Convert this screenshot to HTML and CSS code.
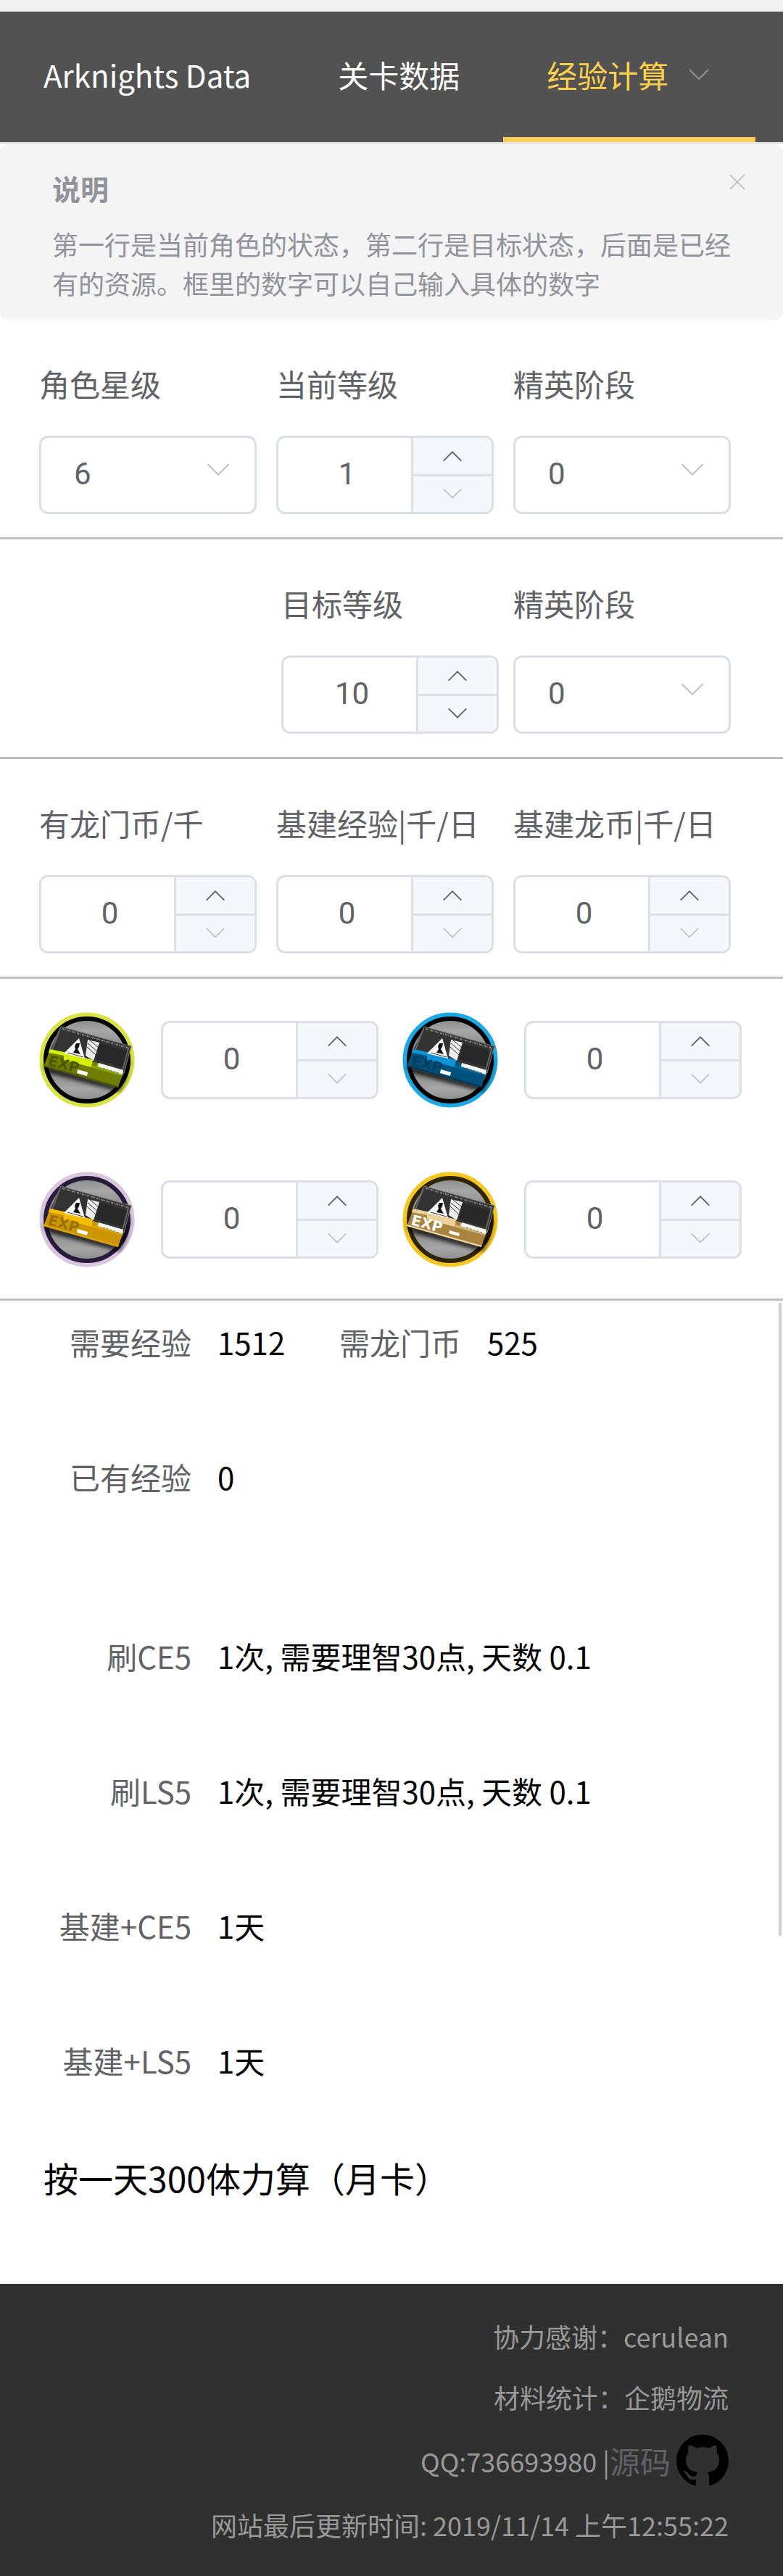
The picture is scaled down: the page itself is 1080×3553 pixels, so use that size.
FILE: index.html
```html
<!DOCTYPE html>
<html lang="zh-CN">
<head>
  <meta charset="utf-8">
  <meta name="viewport" content="width=device-width, initial-scale=1.0">
  <title>Arknights Data</title>
  <link rel="stylesheet" href="styles.css">
</head>
<body>
  <!-- Shared icons -->
  <svg class="icon-defs" aria-hidden="true">
    <defs>
      <linearGradient id="disc" x1="0" y1="0" x2="0" y2="1">
        <stop offset="0" stop-color="#8a8a8a"/>
        <stop offset="0.15" stop-color="#a6a6a6"/>
        <stop offset="0.5" stop-color="#777"/>
        <stop offset="0.85" stop-color="#a6a6a6"/>
        <stop offset="1" stop-color="#8a8a8a"/>
      </linearGradient>
      <filter id="soft"><feGaussianBlur stdDeviation="3"/></filter>
    </defs>
    <symbol id="down" viewBox="0 0 36 36">
      <path d="M5 11 L18 24 L31 11" fill="none" stroke="currentColor" stroke-width="2"/>
    </symbol>
    <symbol id="up" viewBox="0 0 36 36">
      <path d="M5 25 L18 12 L31 25" fill="none" stroke="currentColor" stroke-width="2"/>
    </symbol>
    <symbol id="card" viewBox="0 0 132 132">
      <circle cx="66" cy="66" r="62" class="card-ring"/>
      <circle cx="66" cy="66" r="57" class="card-inner"/>
      <path d="M8 76 L110 104 L124 66 L118 92 L110 108 L14 82 Z" fill="#000" stroke="#000" stroke-width="2" filter="url(#soft)"/>
      <path d="M30 20 L127 47 L117 84 L15 52 Z" fill="#333" stroke="#777" stroke-width="1"/>
      <path d="M32 23 L125 50" stroke="#888" stroke-width="2" stroke-dasharray="3 1 1 2"/>
      <path d="M29 23 L18 52 M123 50 L115 80" stroke="#666" stroke-width="2"/>
      <path d="M84 43 L121 54 L115 76 L78 65 Z" fill="#282828"/>
      <path d="M15 52 L116 82 L109 104 L6 75 Z" class="card-dark"/>
      <path d="M15 51 L34 55 L34 60 L13 56 Z" class="card-bright"/>
      <path d="M34 55 L74 66 L72 76 L34 66 Z" class="card-bright"/>
      <path d="M74 68 L116 82 L114 88 L72 76 Z" class="card-light"/>
      <path d="M6 74 L109 103" class="card-edge"/>
      <path d="M55 36 L34 57 L63 64 Z" fill="#fff"/>
      <path d="M51 43 L56 43 L55 48 L53 51 L57 58 L47 56 L50 51 L49 47 Z" fill="#111"/>
      <path d="M39 56 L61 62" stroke="#333" stroke-width="1"/>
      <path d="M67 38 L83 42 L75 67 L64 60 Z" fill="#eee"/>
      <path d="M69 38 L82 49 M67 43 L80 54 M66 48 L78 59" stroke="#333" stroke-width="1"/>
      <path d="M82 70 L116 80 L115 86 L81 75 Z" fill="#f4f8f0"/>
      <path d="M88 77 L110 84" stroke="#777" stroke-width="1" stroke-dasharray="3 2"/>
      <path d="M74 68 L80 70 L79 75 L73 73 Z" class="card-dark"/>
    </symbol>
  </svg>

  <header class="header">
    <nav class="menu">
      <a class="menu-item" href="#">Arknights Data</a>
      <a class="menu-item" href="#">关卡数据</a>
      <a class="menu-item active" href="#">经验计算<svg class="menu-arrow"><use href="#down"/></svg></a>
    </nav>
  </header>

  <div class="alert">
    <div class="alert-title">说明</div>
    <p class="alert-text">第一行是当前角色的状态，第二行是目标状态，后面是已经有的资源。框里的数字可以自己输入具体的数字</p>
    <button class="alert-close" type="button" aria-label="关闭">
      <svg viewBox="0 0 24 24"><path d="M2 2 L22 22 M22 2 L2 22" stroke="currentColor" stroke-width="2"/></svg>
    </button>
  </div>

  <form>
    <!-- Current state -->
    <div class="row">
      <div class="field">
        <label for="star">角色星级</label>
        <div class="select">
          <select id="star"><option>6</option><option>5</option><option>4</option><option>3</option></select>
          <svg><use href="#down"/></svg>
        </div>
      </div>
      <div class="field">
        <label for="level">当前等级</label>
        <div class="number">
          <input id="level" type="number" min="1" value="1">
          <div class="steps">
            <button type="button" aria-label="增加"><svg><use href="#up"/></svg></button>
            <button type="button" aria-label="减少" disabled><svg><use href="#down"/></svg></button>
          </div>
        </div>
      </div>
      <div class="field">
        <label for="elite">精英阶段</label>
        <div class="select">
          <select id="elite"><option>0</option><option>1</option><option>2</option></select>
          <svg><use href="#down"/></svg>
        </div>
      </div>
    </div>

    <!-- Target state -->
    <div class="row row-target">
      <div class="field">
        <label for="target-level">目标等级</label>
        <div class="number">
          <input id="target-level" type="number" min="1" value="10">
          <div class="steps">
            <button type="button" aria-label="增加"><svg><use href="#up"/></svg></button>
            <button type="button" aria-label="减少"><svg><use href="#down"/></svg></button>
          </div>
        </div>
      </div>
      <div class="field">
        <label for="target-elite">精英阶段</label>
        <div class="select">
          <select id="target-elite"><option>0</option><option>1</option><option>2</option></select>
          <svg><use href="#down"/></svg>
        </div>
      </div>
    </div>

    <!-- Resources -->
    <div class="row">
      <div class="field">
        <label for="money">有龙门币/千</label>
        <div class="number">
          <input id="money" type="number" min="0" value="0">
          <div class="steps">
            <button type="button" aria-label="增加"><svg><use href="#up"/></svg></button>
            <button type="button" aria-label="减少" disabled><svg><use href="#down"/></svg></button>
          </div>
        </div>
      </div>
      <div class="field">
        <label for="base-exp">基建经验|千/日</label>
        <div class="number">
          <input id="base-exp" type="number" min="0" value="0">
          <div class="steps">
            <button type="button" aria-label="增加"><svg><use href="#up"/></svg></button>
            <button type="button" aria-label="减少" disabled><svg><use href="#down"/></svg></button>
          </div>
        </div>
      </div>
      <div class="field">
        <label for="base-money">基建龙币|千/日</label>
        <div class="number">
          <input id="base-money" type="number" min="0" value="0">
          <div class="steps">
            <button type="button" aria-label="增加"><svg><use href="#up"/></svg></button>
            <button type="button" aria-label="减少" disabled><svg><use href="#down"/></svg></button>
          </div>
        </div>
      </div>
    </div>

    <!-- Exp cards -->
    <div class="cards">
      <div class="card">
        <label for="card-green" aria-label="基础作战记录">
          <svg class="card-icon green" viewBox="0 0 132 132">
            <use href="#card"/>
            <text x="11" y="73" transform="rotate(15 11 73)" class="card-exp">EXP</text>
            <path d="M53 79 L67 83 L66 88 L52 84 Z" fill="#fff"/>
          </svg>
        </label>
        <div class="number">
          <input id="card-green" type="number" min="0" value="0">
          <div class="steps">
            <button type="button" aria-label="增加"><svg><use href="#up"/></svg></button>
            <button type="button" aria-label="减少" disabled><svg><use href="#down"/></svg></button>
          </div>
        </div>
      </div>
      <div class="card">
        <label for="card-blue" aria-label="初级作战记录">
          <svg class="card-icon blue" viewBox="0 0 132 132">
            <use href="#card"/>
            <text x="11" y="73" transform="rotate(15 11 73)" class="card-exp">EXP</text>
            <path d="M53 79 L67 83 L66 88 L52 84 Z" fill="#fff"/>
          </svg>
        </label>
        <div class="number">
          <input id="card-blue" type="number" min="0" value="0">
          <div class="steps">
            <button type="button" aria-label="增加"><svg><use href="#up"/></svg></button>
            <button type="button" aria-label="减少" disabled><svg><use href="#down"/></svg></button>
          </div>
        </div>
      </div>
      <div class="card">
        <label for="card-purple" aria-label="中级作战记录">
          <svg class="card-icon purple" viewBox="0 0 132 132">
            <use href="#card"/>
            <text x="11" y="73" transform="rotate(15 11 73)" class="card-exp">EXP</text>
            <path d="M53 79 L67 83 L66 88 L52 84 Z" fill="#fff"/>
          </svg>
        </label>
        <div class="number">
          <input id="card-purple" type="number" min="0" value="0">
          <div class="steps">
            <button type="button" aria-label="增加"><svg><use href="#up"/></svg></button>
            <button type="button" aria-label="减少" disabled><svg><use href="#down"/></svg></button>
          </div>
        </div>
      </div>
      <div class="card">
        <label for="card-gold" aria-label="高级作战记录">
          <svg class="card-icon gold" viewBox="0 0 132 132">
            <use href="#card"/>
            <text x="11" y="73" transform="rotate(15 11 73)" class="card-exp">EXP</text>
            <path d="M65 81 L79 85 L78 89 L64 85 Z" fill="#fff"/>
          </svg>
        </label>
        <div class="number">
          <input id="card-gold" type="number" min="0" value="0">
          <div class="steps">
            <button type="button" aria-label="增加"><svg><use href="#up"/></svg></button>
            <button type="button" aria-label="减少" disabled><svg><use href="#down"/></svg></button>
          </div>
        </div>
      </div>
    </div>
  </form>

  <main class="results">
    <div class="result-group">
      <div class="result">
        <span class="result-label">需要经验</span><span>1512</span>
        <span class="result-label">需龙门币</span><span>525</span>
      </div>
      <div class="result"><span class="result-label">已有经验</span><span>0</span></div>
    </div>
    <div class="result-group">
      <div class="result"><span class="result-label">刷CE5</span><span class="result-wide">1次, 需要理智30点, 天数 0.1</span></div>
      <div class="result"><span class="result-label">刷LS5</span><span class="result-wide">1次, 需要理智30点, 天数 0.1</span></div>
      <div class="result"><span class="result-label">基建+CE5</span><span>1天</span></div>
      <div class="result"><span class="result-label">基建+LS5</span><span>1天</span></div>
    </div>
    <p class="note">按一天300体力算（月卡）</p>
    <div class="scroll-thumb"></div>
  </main>

  <footer class="footer">
    <div class="footer-line">协力感谢：cerulean</div>
    <div class="footer-line">材料统计：企鹅物流</div>
    <div class="footer-line footer-source">
      <span>QQ:736693980 |</span><a href="#">源码</a>
      <svg class="github" viewBox="0 0 16 16"><path d="M8 0C3.58 0 0 3.58 0 8c0 3.54 2.29 6.53 5.47 7.59.4.07.55-.17.55-.38 0-.19-.01-.82-.01-1.49-2.01.37-2.53-.49-2.69-.94-.09-.23-.48-.94-.82-1.13-.28-.15-.68-.52-.01-.53.63-.01 1.08.58 1.23.82.72 1.21 1.87.87 2.33.66.07-.52.28-.87.51-1.07-1.78-.2-3.64-.89-3.64-3.95 0-.87.31-1.59.82-2.15-.08-.2-.36-1.02.08-2.12 0 0 .67-.21 2.2.82.64-.18 1.32-.27 2-.27s1.36.09 2 .27c1.53-1.04 2.2-.82 2.2-.82.44 1.1.16 1.92.08 2.12.51.56.82 1.27.82 2.15 0 3.07-1.87 3.75-3.65 3.95.29.25.54.73.54 1.48 0 1.07-.01 1.93-.01 2.2 0 .21.15.46.55.38A8.01 8.01 0 0 0 16 8c0-4.42-3.58-8-8-8z"/></svg>
    </div>
    <div class="footer-line">网站最后更新时间: 2019/11/14 上午12:55:22</div>
  </footer>

<script>
// Step buttons of the number boxes
document.querySelectorAll('.number').forEach(box => {
  const input = box.querySelector('input');
  const [up, down] = box.querySelectorAll('button');
  const update = () => { down.disabled = Number(input.value) <= Number(input.min); };
  up.onclick = () => { input.stepUp(); update(); };
  down.onclick = () => { input.stepDown(); update(); };
  input.oninput = update;
});

document.querySelector('.alert-close').onclick = () => {
  document.querySelector('.alert').style.display = 'none';
};
</script>
</body>
</html>
```
FILE: styles.css
```css
* {
  box-sizing: border-box;
}

body {
  margin: 0;
  font-family: "Noto Sans CJK SC", sans-serif;
  font-size: 42px;
  color: #000;
  background-color: #fff;
}

a {
  text-decoration: none;
}

button {
  padding: 0;
  border: none;
  background: none;
  cursor: pointer;
}

.icon-defs {
  position: absolute;
  width: 0;
  height: 0;
}

/* Menu */
.header {
  border-top: 16px solid #f1f1f1;
  border-bottom: 3px solid #e6e6e6;
  background-color: #525252;
}

.menu {
  display: flex;
}

.menu-item {
  display: flex;
  align-items: center;
  gap: 24px;
  height: 180px;
  padding: 0 60px;
  border-bottom: 7px solid transparent;
  color: #fff;
  white-space: nowrap;
}

.menu-item.active {
  color: #ffd04b;
  border-bottom-color: #f9d057;
}

.menu-arrow {
  width: 36px;
  height: 36px;
  color: #909399;
}

/* Notice */
.alert {
  position: relative;
  padding: 24px 72px;
  border-radius: 12px;
  background-color: #f4f4f5;
  color: #909399;
}

.alert-title {
  font-size: 39px;
  font-weight: bold;
  line-height: 72px;
}

.alert-text {
  margin: 14px 0 0;
  font-size: 36px;
  line-height: 54px;
}

.alert-close {
  position: absolute;
  top: 40px;
  right: 51px;
  width: 24px;
  height: 24px;
  color: #c0c4cc;
}

.alert-close svg {
  display: block;
}

/* Form */
.row {
  display: grid;
  grid-template-columns: repeat(3, minmax(0, 1fr));
  gap: 27px;
  padding: 28px 72px 32px 54px;
  border-bottom: 3px solid #c0c0c0;
}

.row-target {
  display: flex;
  justify-content: flex-end;
  gap: 20px;
}

.row-target .field {
  width: 300px;
}

.field label {
  display: block;
  margin-bottom: 12px;
  line-height: 120px;
  color: #606266;
  white-space: nowrap;
}

.number,
.select {
  display: flex;
  height: 108px;
  border: 3px solid #dcdfe6;
  border-radius: 12px;
  background-color: #fff;
  overflow: hidden;
}

.number input,
.select select {
  flex: 1;
  min-width: 0;
  border: none;
  outline: none;
  background: none;
  font-family: Roboto, sans-serif;
  font-size: 42px;
  color: #606266;
  appearance: none;
}

.number input {
  padding: 0 39px 4px 45px;
  text-align: center;
  appearance: textfield;
}

.number input::-webkit-inner-spin-button {
  display: none;
}

.steps {
  display: flex;
  flex-direction: column;
  width: 111px;
  border-left: 3px solid #dcdfe6;
  background-color: #f5f7fa;
}

.steps button {
  flex: 1;
  color: #606266;
}

.steps button + button {
  border-top: 3px solid #dcdfe6;
}

.steps button:disabled {
  color: #c0c4cc;
}

.steps svg {
  display: block;
  width: 34px;
  height: 34px;
  margin: 0 auto;
}

.select {
  position: relative;
}

.select select {
  padding: 0 45px 4px;
}

.select svg {
  position: absolute;
  top: 24px;
  right: 30px;
  width: 40px;
  height: 40px;
  color: #c0c4cc;
  pointer-events: none;
}

/* Exp cards */
.cards {
  display: grid;
  grid-template-columns: repeat(2, minmax(0, 1fr));
  gap: 88px 33px;
  padding: 46px 57px 43px 54px;
  border-bottom: 3px solid #c0c0c0;
}

.card {
  display: flex;
  align-items: center;
  gap: 36px;
}

.card .number {
  flex: 1;
}

.card-icon {
  display: block;
  width: 132px;
  height: 132px;
}

.card-ring {
  fill: none;
  stroke: var(--ring);
  stroke-width: 7px;
}

.card-inner {
  fill: url(#disc);
  stroke: var(--inner);
  stroke-width: 6px;
}

.card-dark {
  fill: var(--dark);
}

.card-bright {
  fill: var(--bright);
}

.card-light {
  fill: var(--light);
}

.card-edge {
  stroke: var(--edge);
  stroke-width: 2px;
}

.card-exp {
  font-family: "DejaVu Sans", sans-serif;
  font-size: 20px;
  font-weight: bold;
  fill: var(--exp);
}

.green {
  --ring: #d9e346;
  --inner: #000;
  --dark: #6f7d00;
  --bright: #d4ef00;
  --light: #94a600;
  --edge: #4d5800;
  --exp: #4d5900;
}

.blue {
  --ring: #1ba9e6;
  --inner: #000;
  --dark: #00527c;
  --bright: #0c93d8;
  --light: #0a6594;
  --edge: #003451;
  --exp: #003f63;
}

.purple {
  --ring: #d9c6dc;
  --inner: #271a3c;
  --dark: #cc9600;
  --bright: #f5bd00;
  --light: #dba500;
  --edge: #e0a30a;
  --exp: #9a7100;
}

.gold {
  --ring: #f6c71f;
  --inner: #2f2400;
  --dark: #a8843f;
  --bright: #ecd29a;
  --light: #d0b47a;
  --edge: #f0d9a0;
  --exp: #fff;
}

/* Results */
.results {
  position: relative;
  padding-bottom: 114px;
}

.result-group + .result-group {
  margin-top: 61px;
}

.result {
  display: grid;
  grid-template-columns: 264px 72px 228px 1fr;
  column-gap: 36px;
  height: 186px;
  line-height: 114px;
  white-space: nowrap;
}

.result-label {
  text-align: right;
  color: #606266;
}

.result-wide {
  grid-column: 2 / -1;
}

.note {
  margin: 0;
  padding-left: 60px;
  font-size: 48px;
  line-height: 65px;
}

.scroll-thumb {
  position: absolute;
  top: 3px;
  right: 2px;
  width: 4px;
  height: 873px;
  background-color: #d0d0d0;
}

/* Footer */
.footer {
  padding: 30px 75px 29px;
  background-color: #303030;
  color: #999;
  font-size: 36px;
  text-align: right;
}

.footer-line {
  line-height: 84px;
}

.footer-source {
  display: flex;
  justify-content: flex-end;
  align-items: center;
  height: 92px;
}

.footer-source a {
  font-size: 42px;
  color: #606266;
}

.github {
  width: 72px;
  height: 72px;
  margin-left: 8px;
}
```
